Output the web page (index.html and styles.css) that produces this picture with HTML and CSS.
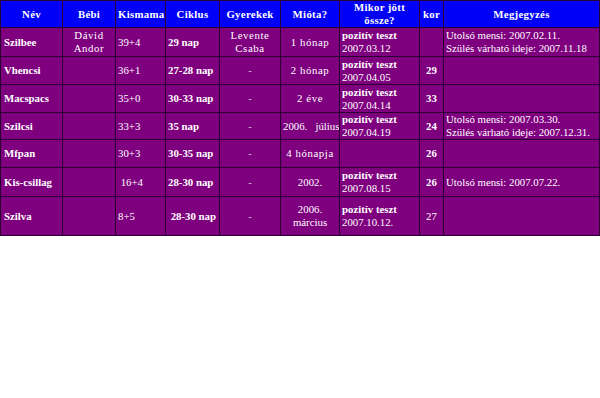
FILE: index.html
```html
<!DOCTYPE html>
<html lang="hu">
<head>
  <meta charset="UTF-8" />
  <title>Kismamák</title>
  <link rel="stylesheet" href="styles.css">
</head>
<body>
  <table class="list">
    <colgroup>
      <col class="c-nev"><col class="c-bebi"><col class="c-kis"><col class="c-cik"><col class="c-gyer">
      <col class="c-miota"><col class="c-mikor"><col class="c-kor"><col class="c-megj">
    </colgroup>
    <thead>
      <tr>
        <th>Név</th>
        <th>Bébi</th>
        <th>Kismama</th>
        <th>Ciklus</th>
        <th>Gyerekek</th>
        <th>Mióta?</th>
        <th>Mikor jött<br>össze?</th>
        <th>kor</th>
        <th>Megjegyzés</th>
      </tr>
    </thead>
    <tbody>
      <tr class="r1">
        <td class="name">Szilbee</td>
        <td class="mid spaced">Dávid<br>Andor</td>
        <td>39+4</td>
        <td class="b">29 nap</td>
        <td class="mid spaced">Levente<br>Csaba</td>
        <td class="mid spaced">1 hónap</td>
        <td><b>pozitív teszt</b><br>2007.03.12</td>
        <td></td>
        <td>Utolsó mensi: 2007.02.11.<br>Szülés várható ideje: 2007.11.18</td>
      </tr>
      <tr class="r2">
        <td class="name">Vhencsi</td>
        <td></td>
        <td>36+1</td>
        <td class="b">27-28 nap</td>
        <td class="mid dash">-</td>
        <td class="mid spaced">2 hónap</td>
        <td><b>pozitív teszt</b><br>2007.04.05</td>
        <td class="mid b">29</td>
        <td></td>
      </tr>
      <tr class="r3">
        <td class="name">Macspacs</td>
        <td></td>
        <td>35+0</td>
        <td class="b">30-33 nap</td>
        <td class="mid dash">-</td>
        <td class="mid spaced">2 éve</td>
        <td><b>pozitív teszt</b><br>2007.04.14</td>
        <td class="mid b">33</td>
        <td></td>
      </tr>
      <tr class="r4">
        <td class="name">Szilcsi</td>
        <td></td>
        <td>33+3</td>
        <td class="b">35 nap</td>
        <td class="mid dash">-</td>
        <td class="mid">2006.&nbsp;&nbsp; július</td>
        <td><b>pozitív teszt</b><br>2007.04.19</td>
        <td class="mid b">24</td>
        <td>Utolsó mensi: 2007.03.30.<br>Szülés várható ideje: 2007.12.31.</td>
      </tr>
      <tr class="r5">
        <td class="name">Mfpan</td>
        <td></td>
        <td>30+3</td>
        <td class="b">30-35 nap</td>
        <td class="mid dash">-</td>
        <td class="mid spaced">4 hónapja</td>
        <td></td>
        <td class="mid b">26</td>
        <td></td>
      </tr>
      <tr class="r6">
        <td class="name">Kis-csillag</td>
        <td></td>
        <td>&nbsp;16+4</td>
        <td class="b">28-30 nap</td>
        <td class="mid dash">-</td>
        <td class="mid">2002.</td>
        <td><b>pozitív teszt</b><br>2007.08.15</td>
        <td class="mid b">26</td>
        <td>Utolsó mensi: 2007.07.22.</td>
      </tr>
      <tr class="r7">
        <td class="name">Szilva</td>
        <td></td>
        <td>8+5</td>
        <td class="b">&nbsp;28-30 nap</td>
        <td class="mid dash">-</td>
        <td class="mid">2006.<br>március</td>
        <td><b>pozitív teszt</b><br>2007.10.12.</td>
        <td class="mid">27</td>
        <td></td>
      </tr>
    </tbody>
  </table>
</body>
</html>
```

FILE: styles.css
```css
body {
  margin: 0;
  background-color: #ffffff;
  font-family: "Liberation Serif", "Times New Roman", serif;
  font-size: 10.8px;
  color: #ffffff;
}

.list {
  width: 599px;
  border-collapse: collapse;
  table-layout: fixed;
  background-color: #7e007e;
  border: 1px solid #2a0030;
}

.c-nev { width: 62px; }
.c-bebi { width: 53px; }
.c-kis { width: 50px; }
.c-cik { width: 54px; }
.c-gyer { width: 61px; }
.c-miota { width: 59px; }
.c-mikor { width: 80px; }
.c-kor { width: 24px; }
.c-megj { width: 156px; }

th, td {
  border: 1px solid #2a0030;
  padding: 0 2px;
  line-height: 13px;
  vertical-align: middle;
  text-align: left;
  white-space: nowrap;
  overflow: hidden;
}

th {
  background-color: #0000f8;
  text-align: center;
  font-weight: bold;
  height: 26px;
  letter-spacing: 0.3px;
}

td.name {
  font-weight: bold;
  padding-left: 3px;
}

td.mid {
  text-align: center;
}

td.b {
  font-weight: bold;
}

td.spaced {
  letter-spacing: 0.6px;
}

td.dash {
  color: #d8b8d8;
}

.r1 td { height: 28px; }
.r2 td { height: 27px; }
.r3 td { height: 27px; }
.r4 td { height: 26px; }
.r5 td { height: 27px; }
.r6 td { height: 28px; }
.r7 td { height: 38px; }
```
